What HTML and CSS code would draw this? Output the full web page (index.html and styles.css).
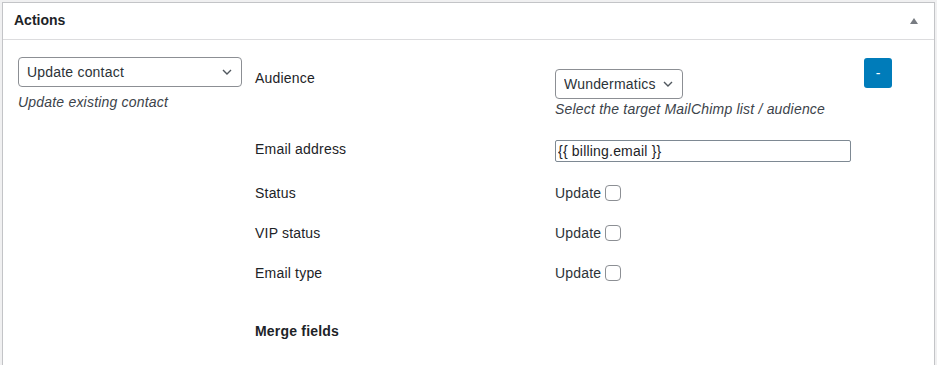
FILE: index.html
```html
<!DOCTYPE html>
<html lang="en">

<head>
    <meta charset="UTF-8">
    <meta name="viewport" content="width=device-width, initial-scale=1.0">
    <title>Actions</title>
    <link rel="stylesheet" href="styles.css">
</head>

<body>
    <div class="postbox">
        <div class="postbox-header">
            <h2>Actions</h2>
            <button class="toggle-btn" title="Toggle panel">
                <svg width="10" height="8" viewBox="0 0 10 8"><path d="M1 7 L5 1 L9 7 Z" fill="#787c82"/></svg>
            </button>
        </div>

        <div class="inside">
            <div class="action-row">
                <div class="action-type">
                    <div class="select-wrap select-wide">
                        <select>
                            <option>Update contact</option>
                        </select>
                        <svg class="chevron" width="12" height="8" viewBox="0 0 12 8"><path d="M2 2 L6 6 L10 2" fill="none" stroke="#50575e" stroke-width="1.4"/></svg>
                    </div>
                    <p class="description">Update existing contact</p>
                </div>

                <div class="action-fields">
                    <div class="field-row">
                        <label>Audience</label>
                        <div class="field">
                            <div class="select-wrap">
                                <select class="select-small">
                                    <option>Wundermatics</option>
                                </select>
                                <svg class="chevron" width="12" height="8" viewBox="0 0 12 8"><path d="M2 2 L6 6 L10 2" fill="none" stroke="#50575e" stroke-width="1.4"/></svg>
                            </div>
                            <p class="description">Select the target MailChimp list / audience</p>
                        </div>
                    </div>
                    <div class="field-row">
                        <label for="email">Email address</label>
                        <div class="field">
                            <input type="text" id="email" class="text-input" value="{{ billing.email }}">
                        </div>
                    </div>
                    <div class="field-row">
                        <label>Status</label>
                        <div class="field">
                            <label class="check">Update <input type="checkbox"></label>
                        </div>
                    </div>
                    <div class="field-row">
                        <label>VIP status</label>
                        <div class="field">
                            <label class="check">Update <input type="checkbox"></label>
                        </div>
                    </div>
                    <div class="field-row">
                        <label>Email type</label>
                        <div class="field">
                            <label class="check">Update <input type="checkbox"></label>
                        </div>
                    </div>
                    <h4 class="merge-title">Merge fields</h4>
                </div>

                <div class="action-remove">
                    <button class="remove-btn" title="Remove action">-</button>
                </div>
            </div>
        </div>
    </div>
</body>

</html>
```

FILE: styles.css
```css
* {
    margin: 0;
    padding: 0;
    box-sizing: border-box;
    font-family: 'Liberation Sans', Arial, sans-serif;
}

body {
    background: #f0f0f1;
    margin: 2px 2px 0 2px;
    color: #1d2327;
    font-size: 14px;
    letter-spacing: 0.2px;
}

.postbox {
    background: white;
    border: 1px solid #c3c4c7;
    border-bottom: none;
    height: 363px;
}

.postbox-header {
    display: flex;
    justify-content: space-between;
    align-items: center;
    height: 37px;
    border-bottom: 1px solid #dcdcde;
    padding: 0 12px 0 11px;
}

.postbox-header h2 {
    font-size: 14px;
    font-weight: 600;
    line-height: 1.4;
    letter-spacing: 0;
}

.toggle-btn {
    background: none;
    border: none;
    width: 16px;
    height: 16px;
    display: flex;
    align-items: center;
    justify-content: center;
    cursor: pointer;
}

.inside {
    padding: 17px 0 0 15px;
}

.action-row {
    display: flex;
    align-items: flex-start;
}

.action-type {
    width: 224px;
    margin-right: 13px;
}

.select-wrap {
    position: relative;
    display: inline-block;
}

.select-wide {
    width: 224px;
}

select {
    appearance: none;
    -webkit-appearance: none;
    width: 100%;
    height: 30px;
    border: 1px solid #8c8f94;
    border-radius: 4px;
    background: white;
    color: #2c3338;
    font-size: 14px;
    letter-spacing: 0.2px;
    padding: 0 24px 0 8px;
}

.select-small {
    width: 128px;
}

.chevron {
    position: absolute;
    right: 9px;
    top: 11px;
    pointer-events: none;
}

.description {
    font-style: italic;
    color: #3c434a;
    font-size: 14px;
    line-height: 1.3;
    margin-top: 6px;
}

.action-fields {
    width: 596px;
    padding-top: 1px;
}

.field-row {
    display: grid;
    grid-template-columns: 300px 296px;
    padding: 11px 0;
}

.field-row > label {
    line-height: 18px;
    color: #1d2327;
}

.field .description {
    margin-top: 1px;
}

.text-input {
    width: 100%;
    height: 22px;
    border: 1px solid #7e8993;
    border-radius: 2px;
    padding: 0 2px;
    font-size: 14px;
    letter-spacing: 0.2px;
    color: #1d2327;
}

.check {
    display: flex;
    align-items: center;
    gap: 4px;
    line-height: 18px;
    color: #2c3338;
}

.check input {
    appearance: none;
    -webkit-appearance: none;
    width: 16px;
    height: 16px;
    border: 1px solid #8c8f94;
    border-radius: 4px;
    background: white;
}

.merge-title {
    font-size: 14px;
    font-weight: 600;
    margin-top: 29px;
    line-height: 18px;
}

.action-remove {
    margin-left: 13px;
    padding-top: 1px;
}

.remove-btn {
    width: 28px;
    height: 30px;
    background: #007cba;
    color: white;
    border: none;
    border-radius: 3px;
    font-size: 14px;
    font-weight: 400;
    cursor: pointer;
}
```
